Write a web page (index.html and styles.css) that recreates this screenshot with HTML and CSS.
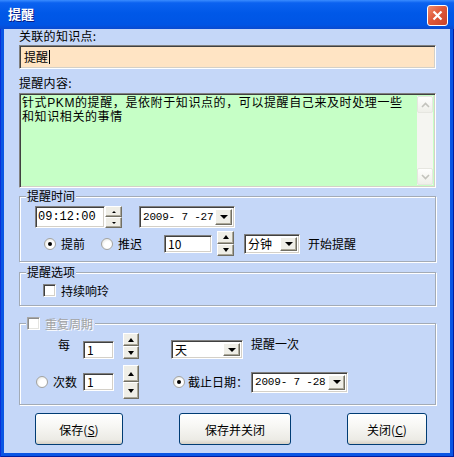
FILE: index.html
```html
<!DOCTYPE html>
<html lang="zh-CN">
<head>
  <meta charset="UTF-8">
  <title>提醒</title>
  <link rel="stylesheet" href="styles.css">
</head>
<body>

  <div class="window">
    <div class="titlebar">
      <span class="title">提醒</span>
      <span class="close-btn">
        <svg width="11" height="11" viewBox="0 0 11 11"><path d="M1.5 1.5 L9.5 9.5 M9.5 1.5 L1.5 9.5" stroke="#fff" stroke-width="2.2"/></svg>
      </span>
    </div>

    <div class="client">
      <div class="label">关联的知识点:</div>
      <div class="edit topic">提醒<span class="caret"></span></div>

      <div class="label label-gap">提醒内容:</div>
      <div class="edit memo">
        <div class="memo-text">针式PKM的提醒，是依附于知识点的，可以提醒自己来及时处理一些<br>和知识相关的事情</div>
        <div class="vscroll">
          <span class="sb-btn"><svg width="9" height="6" viewBox="0 0 9 6"><path d="M1 5 L4.5 1.5 L8 5" fill="none" stroke="#c3c3bd" stroke-width="1.6"/></svg></span>
          <span class="sb-track"></span>
          <span class="sb-btn"><svg width="9" height="6" viewBox="0 0 9 6"><path d="M1 1 L4.5 4.5 L8 1" fill="none" stroke="#c3c3bd" stroke-width="1.6"/></svg></span>
        </div>
      </div>

      <fieldset class="group group-time">
        <legend>提醒时间</legend>
        <div class="row row-datetime">
          <div class="edit time-box mono">09:12:00</div>
          <div class="spin spin-time">
            <span class="spin-btn"><i class="tri-up small"></i></span>
            <span class="spin-btn"><i class="tri-down small"></i></span>
          </div>
          <div class="edit combo date-box">
            <span class="combo-text mono date">2009- 7 -27</span>
            <span class="drop"><i class="tri-down"></i></span>
          </div>
        </div>
        <div class="row row-offset">
          <span class="radio on"></span>
          <span class="opt-text">提前</span>
          <span class="radio gap-radio"></span>
          <span class="opt-text">推迟</span>
          <div class="edit num-box">10</div>
          <div class="spin spin-num">
            <span class="spin-btn"><i class="tri-up"></i></span>
            <span class="spin-btn"><i class="tri-down"></i></span>
          </div>
          <div class="edit combo unit-box">
            <span class="combo-text">分钟</span>
            <span class="drop"><i class="tri-down"></i></span>
          </div>
          <span class="after-text">开始提醒</span>
        </div>
      </fieldset>

      <fieldset class="group group-option">
        <legend>提醒选项</legend>
        <div class="row row-check">
          <span class="check"></span>
          <span class="opt-text">持续响玲</span>
        </div>
      </fieldset>

      <fieldset class="group group-repeat">
        <legend class="legend-check"><span class="check disabled"></span><span class="disabled-text">重复周期</span></legend>
        <div class="row row-every">
          <span class="every-text">每</span>
          <div class="edit small-box">1</div>
          <div class="spin spin-every">
            <span class="spin-btn"><i class="tri-up"></i></span>
            <span class="spin-btn"><i class="tri-down"></i></span>
          </div>
          <div class="edit combo day-box">
            <span class="combo-text">天</span>
            <span class="drop"><i class="tri-down"></i></span>
          </div>
          <span class="after-text">提醒一次</span>
        </div>
        <div class="row row-until">
          <span class="radio"></span>
          <span class="opt-text">次数</span>
          <div class="edit small-box count-box">1</div>
          <div class="spin spin-count">
            <span class="spin-btn"><i class="tri-up"></i></span>
            <span class="spin-btn"><i class="tri-down"></i></span>
          </div>
          <span class="radio until-radio on"></span>
          <span class="until-text">截止日期：</span>
          <div class="edit combo end-box">
            <span class="combo-text mono date">2009- 7 -28</span>
            <span class="drop"><i class="tri-down"></i></span>
          </div>
        </div>
      </fieldset>

      <div class="buttons">
        <button class="btn btn-save">保存(<u>S</u>)</button>
        <button class="btn btn-save-close">保存并关闭</button>
        <button class="btn btn-close">关闭(<u>C</u>)</button>
      </div>
    </div>
  </div>

</body>
</html>
```

FILE: styles.css
```css
* {
  box-sizing: border-box;
}
body {
  margin: 0;
  font-family: "Noto Sans CJK SC", "Liberation Sans", sans-serif;
  font-size: 12px;
  color: #000;
}
.window {
  width: 454px;
  height: 457px;
  display: flex;
  flex-direction: column;
  background: #0a56e4;
  padding: 0 4px 4px;
  box-shadow: inset 1px 0 0 #0831d9, inset -1px -1px 0 #001ea0;
}
.titlebar {
  height: 29px;
  margin: 0 -4px;
  display: flex;
  align-items: flex-start;
  justify-content: space-between;
  padding: 5px 6px 0 8px;
  background: linear-gradient(#3a8cff 0, #0b62f0 10%, #0058e8 45%, #0055e5 85%, #0a4ad0 100%);
}
.title {
  margin-top: 2px;
  color: #fff;
  font-size: 13px;
  font-weight: bold;
  line-height: 14px;
  text-shadow: 1px 1px 0 #0a1d85;
}
.close-btn {
  width: 21px;
  height: 21px;
  display: flex;
  align-items: center;
  justify-content: center;
  border: 1px solid #fff;
  border-radius: 3px;
  background: linear-gradient(135deg, #ef8c6c 0, #e0593a 45%, #c8432a 100%);
}
.client {
  flex: 1;
  display: flex;
  flex-direction: column;
  background: #c5d7f8;
  padding: 0 14px 0 15px;
}
.label {
  height: 16px;
  line-height: 12px;
  padding-top: 1px;
  letter-spacing: 0.3px;
}
.label-gap {
  margin-top: 7px;
  height: 17px;
}
.edit {
  background: #fff;
  border: 1px solid;
  border-color: #808080 #fff #fff #808080;
  box-shadow: inset 1px 1px 0 #404040, inset -1px -1px 0 #d4d0c8;
  display: flex;
  align-items: center;
  padding-left: 3px;
  line-height: 12px;
}
.topic {
  height: 24px;
  background: #ffe4c4;
  padding-left: 4px;
}
.caret {
  width: 1px;
  height: 14px;
  margin-left: 1px;
  background: #000;
}
.memo {
  height: 95px;
  background: #c6ffc6;
  align-items: stretch;
  padding: 2px;
}
.memo-text {
  flex: 1;
  padding: 1px 0 0 0;
  font-family: "Liberation Sans", "Noto Sans CJK SC", sans-serif;
  line-height: 13.5px;
  letter-spacing: 0.6px;
}
.vscroll {
  width: 16px;
  display: flex;
  flex-direction: column;
  background: #f5f5f1;
}
.sb-btn {
  height: 17px;
  display: flex;
  align-items: center;
  justify-content: center;
  border: 1px solid #e6e6e0;
  border-radius: 2px;
  background: linear-gradient(#fefefd, #efefe9);
}
.sb-track {
  flex: 1;
}
.group {
  margin: 2px 0 0;
  padding: 0 0 5px;
  border: 1px solid #a3abb6;
  box-shadow: inset 1px 1px 0 #fff, 1px 1px 0 #fff;
}
.group legend {
  margin-left: 6px;
  padding: 0 1px;
  line-height: 12px;
  background: #c5d7f8;
}
.group-option {
  margin-top: 4px;
  padding-bottom: 8px;
}
.group-repeat {
  margin-top: 11px;
}
.legend-check {
  display: flex;
  align-items: center;
  height: 13px;
}
.row {
  display: flex;
  align-items: center;
}
.mono {
  font-family: "Liberation Mono", monospace;
}
.date {
  font-size: 11px;
  letter-spacing: -0.2px;
}
.row-datetime {
  margin-top: 4px;
  height: 22px;
  padding-left: 15px;
}
.time-box {
  width: 70px;
  height: 22px;
  padding-left: 2px;
}
.spin {
  display: flex;
  flex-direction: column;
  width: 17px;
}
.spin-btn {
  flex: 1;
  display: flex;
  align-items: center;
  justify-content: center;
  background: #efeee7;
  border: 1px solid;
  border-color: #fff #716f64 #716f64 #fff;
  box-shadow: inset -1px -1px 0 #aca899;
}
.spin-time {
  height: 22px;
}
.tri-up, .tri-down {
  width: 0;
  height: 0;
  border-left: 3px solid transparent;
  border-right: 3px solid transparent;
}
.tri-up {
  border-bottom: 4px solid #000;
}
.tri-down {
  border-top: 4px solid #000;
}
.tri-up.small {
  border-width: 0 2px 2px;
  border-bottom-color: #000;
}
.tri-down.small {
  border-width: 2px 2px 0;
  border-top-color: #000;
}
.combo {
  padding: 2px 2px 2px 3px;
}
.combo-text {
  flex: 1;
  min-width: 0;
  white-space: pre;
  line-height: 12px;
}
.drop {
  width: 17px;
  flex: none;
  align-self: stretch;
  display: flex;
  align-items: center;
  justify-content: center;
  background: #efeee7;
  border: 1px solid;
  border-color: #fff #716f64 #716f64 #fff;
  box-shadow: inset -1px -1px 0 #aca899;
}
.drop .tri-down {
  border-left-width: 4px;
  border-right-width: 4px;
}
.date-box {
  width: 96px;
  height: 22px;
  margin-left: 17px;
}
.row-offset {
  margin-top: 3px;
  height: 25px;
  padding-left: 24px;
}
.radio {
  width: 12px;
  height: 12px;
  flex: none;
  display: flex;
  align-items: center;
  justify-content: center;
  border-radius: 50%;
  border: 1px solid #a4a4a0;
  background: radial-gradient(circle at 60% 60%, #fff 40%, #dcdcd6 100%);
}
.radio.on::after {
  content: "";
  width: 4px;
  height: 4px;
  border-radius: 50%;
  background: #000;
}
.opt-text {
  margin-left: 5px;
  line-height: 12px;
}
.gap-radio {
  margin-left: 16px;
}
.num-box {
  width: 48px;
  height: 18px;
  margin-left: 22px;
}
.spin-num {
  height: 25px;
  margin-left: 5px;
}
.unit-box {
  width: 56px;
  height: 20px;
  margin-left: 10px;
}
.after-text {
  margin-left: 8px;
  line-height: 12px;
}
.row-check {
  margin-top: 6px;
  height: 13px;
  padding-left: 23px;
}
.check {
  width: 13px;
  height: 13px;
  flex: none;
  background: #fff;
  border: 1px solid;
  border-color: #808080 #fff #fff #808080;
  box-shadow: inset 1px 1px 0 #404040, inset -1px -1px 0 #d4d0c8;
}
.check.disabled {
  border-color: #a8a8a8 #fff #fff #a8a8a8;
  box-shadow: inset 1px 1px 0 #8c8c8c, inset -1px -1px 0 #e4e4e0;
}
.disabled-text {
  margin-left: 5px;
  margin-right: 1px;
  color: #a3a3a3;
  text-shadow: 1px 1px 0 #fff;
}
.row-every {
  margin-top: 3px;
  height: 26px;
  padding-left: 38px;
  align-items: flex-end;
}
.every-text {
  line-height: 12px;
  margin-bottom: 8px;
}
.small-box {
  width: 31px;
  height: 18px;
  margin-left: 13px;
}
.spin-every {
  height: 26px;
  width: 16px;
  margin-left: 9px;
}
.day-box {
  width: 72px;
  height: 19px;
  margin-left: 32px;
}
.row-every .after-text {
  margin-bottom: 9px;
}
.row-until {
  margin-top: 6px;
  height: 34px;
  padding-left: 16px;
}
.count-box {
  margin-left: 6px;
}
.spin-count {
  height: 34px;
  width: 16px;
  margin-left: 9px;
}
.until-radio {
  margin-left: 34px;
}
.until-text {
  margin-left: 3px;
  line-height: 12px;
}
.end-box {
  width: 97px;
  height: 21px;
  margin-left: 3px;
}
.buttons {
  display: flex;
  margin-top: 8px;
}
.btn {
  height: 32px;
  font-family: "Noto Sans CJK SC", "Liberation Sans", sans-serif;
  font-size: 12px;
  color: #000;
  border: 1px solid #003c74;
  border-radius: 3px;
  background: linear-gradient(#fff 0, #f7f7f4 40%, #ecebe5 85%, #d6d0c5 100%);
  padding: 0;
  margin-left: 56px;
}
.btn-save {
  width: 88px;
  margin-left: 16px;
}
.btn-save-close {
  width: 112px;
}
.btn-close {
  width: 80px;
}
```
